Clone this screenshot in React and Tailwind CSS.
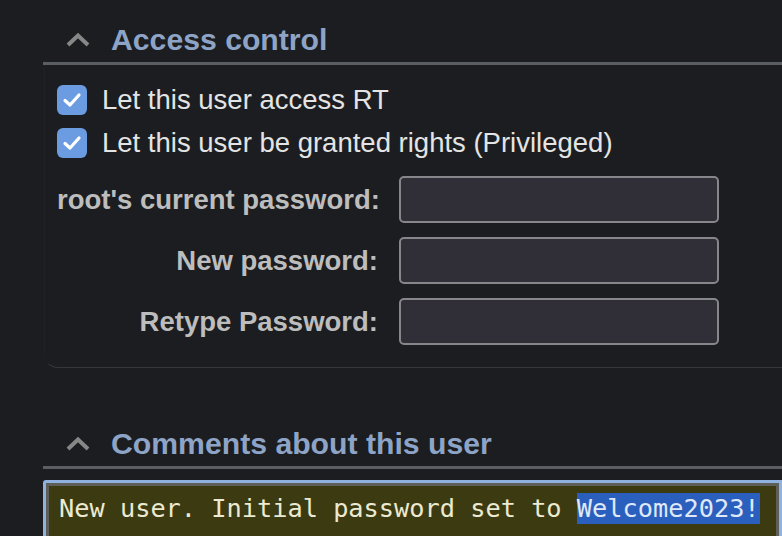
import React from "react";

function Chevron() {
  return (
    <svg width="26" height="16" viewBox="0 0 26 16" className="shrink-0">
      <path d="M3 13 L13 3.5 L23 13" fill="none" stroke="#878787" strokeWidth="4" strokeLinejoin="miter" />
    </svg>
  );
}

function Heading({ title, className }) {
  return (
    <div className={"flex items-center h-[45px] pb-[2px] border-b-[3px] border-[#5a5d61] " + className}>
      <div className="ml-[22px] w-[46px]">
        <Chevron />
      </div>
      <div className="text-[30.2px] leading-[36px] font-bold text-[#8ea4c7] whitespace-nowrap">{title}</div>
    </div>
  );
}

function Check({ label }) {
  return (
    <div className="flex items-center h-[30px]">
      <div className="w-[30px] h-[30px] rounded-[6px] bg-[#6b9ce2] flex items-center justify-center shrink-0">
        <svg width="20" height="16" viewBox="0 0 20 16">
          <path d="M3 8.5 L8 13 L17 3" fill="none" stroke="#ffffff" strokeWidth="3.2" strokeLinecap="round" strokeLinejoin="round" />
        </svg>
      </div>
      <div className="ml-[15px] text-[27.5px] leading-[32px] text-[#e4e4e4] whitespace-nowrap">{label}</div>
    </div>
  );
}

function Field({ label }) {
  return (
    <div className="flex items-center h-[47px]">
      <div className="w-[321px] text-right text-[27.5px] leading-[32px] font-bold text-[#bdbdbd] whitespace-nowrap">{label}</div>
      <div className="ml-[21px] w-[320px] h-[47px] rounded-[5px] border-2 border-[#87878b] bg-[#302f37]" />
    </div>
  );
}

export default function App() {
  return (
    <div className="w-[782px] h-[536px] overflow-hidden bg-[#1b1d20] font-['Liberation_Sans',Arial,sans-serif]">
      <div className="ml-[43px]">
        <Heading title="Access control" className="mt-[20px]" />
        <div className="ml-[1px] border-b border-l border-b-[#34373b] border-l-[#1f2124] rounded-bl-[14px] pl-[12px] pt-[20px] pb-[22px]">
          <div className="flex flex-col gap-[13px]">
            <Check label="Let this user access RT" />
            <Check label="Let this user be granted rights (Privileged)" />
          </div>
          <div className="mt-[18px] flex flex-col gap-[14px]">
            <Field label="root's current password:" />
            <Field label="New password:" />
            <Field label="Retype Password:" />
          </div>
        </div>
        <Heading title="Comments about this user" className="mt-[56px]" />
        <div className="mt-[11px] h-[90px] border-[3px] border-[#8fb2df] rounded-tl-[3px]">
          <div className="h-full border-[3px] border-[#5e5f58] bg-[#3c3a10] pl-[10px] pt-[7px] font-['DejaVu_Sans_Mono',monospace] text-[25.3px] leading-[31px] text-[#ecead2] whitespace-nowrap">
            New user. Initial password set to <span className="bg-[#2b5fbe] text-[#dfe8f6] py-[1px]">Welcome2023!</span>
          </div>
        </div>
      </div>
    </div>
  );
}
